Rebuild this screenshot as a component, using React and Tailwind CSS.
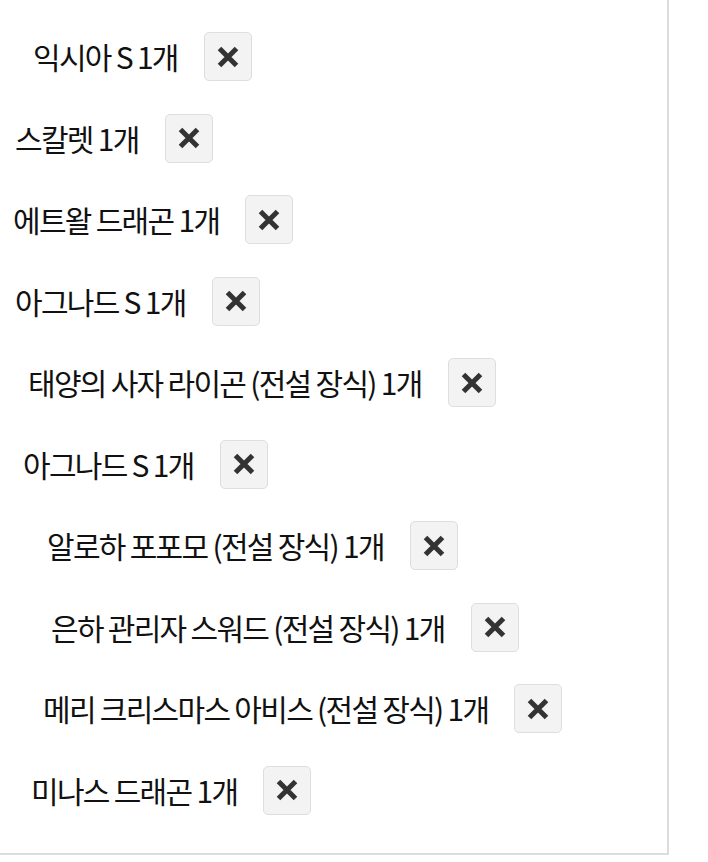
import React from 'react'

const items = [
  { id: 1, name: '익시아 S 1개', indent: 'pl-[33px]' },
  { id: 2, name: '스칼렛 1개', indent: 'pl-[15px]' },
  { id: 3, name: '에트왈 드래곤 1개', indent: 'pl-[13px]' },
  { id: 4, name: '아그나드 S 1개', indent: 'pl-[15px]' },
  { id: 5, name: '태양의 사자 라이곤 (전설 장식) 1개', indent: 'pl-[28px]' },
  { id: 6, name: '아그나드 S 1개', indent: 'pl-[23px]' },
  { id: 7, name: '알로하 포포모 (전설 장식) 1개', indent: 'pl-[47px]' },
  { id: 8, name: '은하 관리자 스워드 (전설 장식) 1개', indent: 'pl-[51px]' },
  { id: 9, name: '메리 크리스마스 아비스 (전설 장식) 1개', indent: 'pl-[43px]' },
  { id: 10, name: '미나스 드래곤 1개', indent: 'pl-[31px]' },
]

const RemoveButton = () => (
  <button
    className="flex h-[49px] w-[48px] shrink-0 items-center justify-center rounded-[5px] border border-[#dedede] bg-[#f3f3f3]"
    aria-label="삭제"
  >
    <svg width="24" height="24" viewBox="0 0 24 24" fill="none" stroke="#333" strokeWidth="5">
      <path d="M3.5 3.5L20.5 20.5M20.5 3.5L3.5 20.5" />
    </svg>
  </button>
)

const App = () => {
  return (
    <div className="min-h-screen bg-white">
      <div className="w-[669px] h-[855px] border-r-2 border-b-2 border-[#dcdcdc] pt-[32px]">
        <div className="flex flex-col gap-[32.5px]">
          {items.map((item) => (
            <div key={item.id} className={`flex items-center gap-[26px] h-[49px] ${item.indent}`}>
              <span className="font-['Noto_Sans_CJK_KR',sans-serif] text-[30px] tracking-[-1.7px] text-[#111] whitespace-nowrap">
                {item.name}
              </span>
              <RemoveButton />
            </div>
          ))}
        </div>
      </div>
    </div>
  )
}

export default App
